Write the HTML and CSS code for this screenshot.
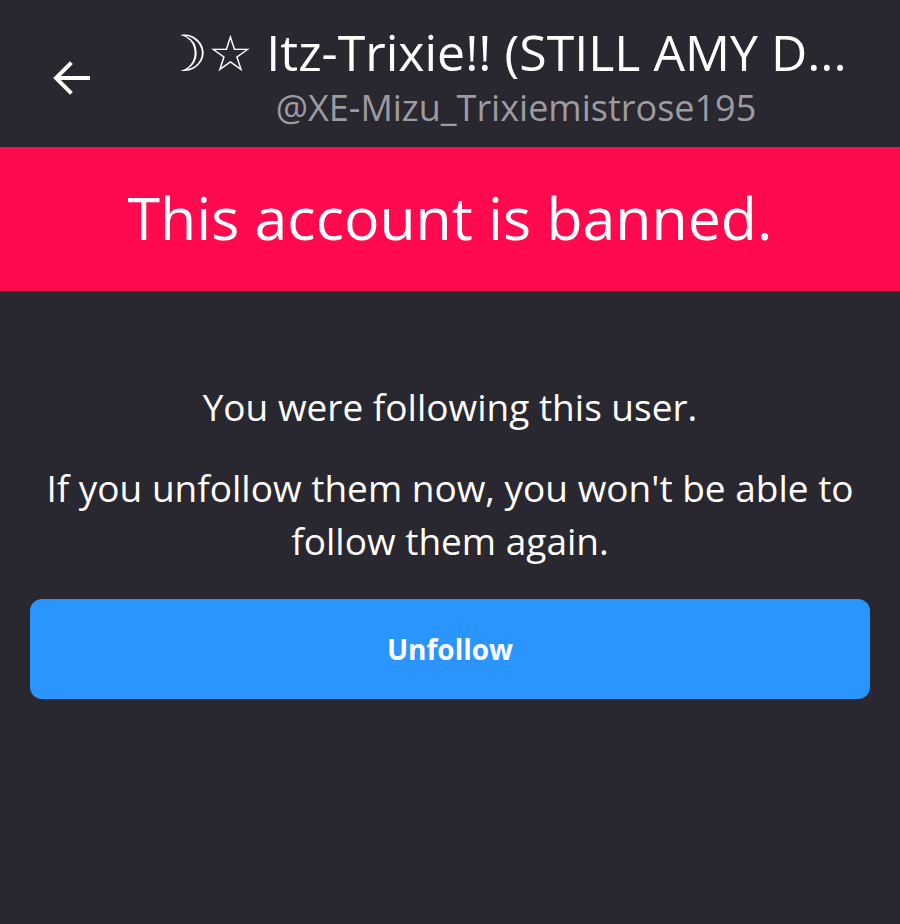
FILE: index.html
```html
<!DOCTYPE html>
<html>
<head>
<meta charset="utf-8">
<link rel="stylesheet" href="styles.css">
</head>
<body>
<div class="page">
  <header class="topbar">
    <button class="back" aria-label="Back">
      <svg width="40" height="40" viewBox="0 0 40 40" fill="none" stroke="#fff" stroke-width="4" stroke-linecap="square">
        <path d="M37 20H6"/>
        <path d="M19 6L5 20l14 14"/>
      </svg>
    </button>
    <div class="names">
      <div class="display-name">☽☆ Itz-Trixie!! (STILL AMY D...</div>
      <div class="handle">@XE-Mizu_Trixiemistrose195</div>
    </div>
  </header>
  <div class="banned">This account is banned.</div>
  <main class="content">
    <p class="msg first">You were following this user.</p>
    <p class="msg">If you unfollow them now, you won't be able to follow them again.</p>
    <button class="unfollow">Unfollow</button>
  </main>
</div>
</body>
</html>
```
FILE: styles.css
```css
html, body {
  margin: 0;
  padding: 0;
  background: #29272f;
}
body {
  font-family: "Open Sans", sans-serif;
  color: #fff;
  width: 900px;
  height: 924px;
  overflow: hidden;
}
.page {
  display: flex;
  flex-direction: column;
}
.topbar {
  height: 147px;
  display: flex;
  align-items: flex-start;
  box-sizing: border-box;
  padding: 0 0 0 50px;
}
.back {
  background: none;
  border: 0;
  padding: 0;
  margin-top: 57px;
  width: 42px;
  height: 42px;
  display: flex;
  align-items: center;
  justify-content: center;
}
.names {
  flex: 1;
  min-width: 0;
  display: flex;
  flex-direction: column;
  align-items: center;
  padding-top: 22px;
  padding-left: 18px;
}
.display-name {
  font-size: 50px;
  line-height: 60px;
  white-space: nowrap;
  color: #fff;
}
.handle {
  font-size: 36px;
  line-height: 44px;
  color: #9c9ba0;
  margin-top: 4px;
  padding-left: 22px;
}
.banned {
  background: #ff0a4e;
  height: 144px;
  box-sizing: border-box;
  padding-bottom: 5px;
  display: flex;
  align-items: center;
  justify-content: center;
  font-size: 59px;
  color: #fff;
}
.content {
  padding: 89px 30px 0;
  display: flex;
  flex-direction: column;
  align-items: center;
}
.msg {
  margin: 0;
  font-size: 37px;
  line-height: 53px;
  text-align: center;
}
.msg.first {
  margin-bottom: 28px;
}
.unfollow {
  margin-top: 32px;
  width: 840px;
  height: 100px;
  border: 0;
  border-radius: 12px;
  background: #2a94ff;
  color: #fff;
  font-family: "Open Sans", sans-serif;
  font-weight: 700;
  font-size: 28px;
}
```
